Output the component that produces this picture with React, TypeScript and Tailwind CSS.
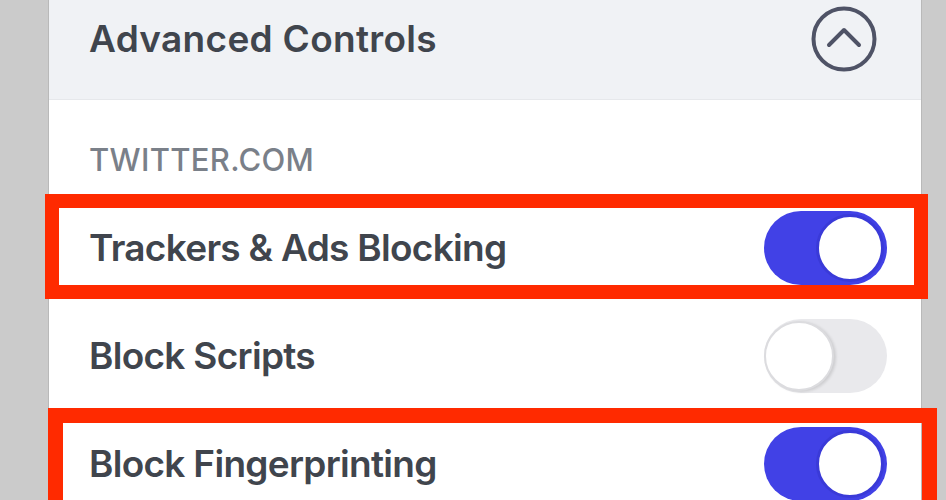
import { useState } from 'react'

type ToggleProps = { on: boolean; onChange: () => void }

const Toggle = ({ on, onChange }: ToggleProps) => {
  return (
    <button
      type="button"
      onClick={onChange}
      className={`relative h-[74px] w-[123px] shrink-0 rounded-full ${on ? 'bg-[#4141e6]' : 'bg-[#e9e9ec]'}`}
    >
      {on ? (
        <span className="absolute right-[3px] top-[3px] h-[68px] w-[68px] rounded-full border-[3px] border-[#3a3ad8] bg-white" />
      ) : (
        <span className="absolute left-0 top-[2px] h-[70px] w-[70px] rounded-full border-2 border-[#dcdcdf] bg-white shadow-[2px_1px_3px_rgba(0,0,0,0.12)]" />
      )}
    </button>
  )
}

const App = () => {
  const [trackers, setTrackers] = useState(true)
  const [scripts, setScripts] = useState(false)
  const [fingerprint, setFingerprint] = useState(true)

  const rows = [
    { label: 'Trackers & Ads Blocking', on: trackers, toggle: () => setTrackers(!trackers) },
    { label: 'Block Scripts', on: scripts, toggle: () => setScripts(!scripts) },
    { label: 'Block Fingerprinting', on: fingerprint, toggle: () => setFingerprint(!fingerprint) },
  ]

  return (
    <div
      className="relative flex h-[500px] w-[946px] overflow-hidden bg-[#cbcbcb] pl-[48px] pr-[24px]"
      style={{ fontFamily: 'Inter, "Noto Sans", sans-serif' }}
    >
      {/* Panel */}
      <div className="flex w-full flex-col border-x border-[#b9b9b9] bg-white">
        {/* Header */}
        <div className="flex h-[100px] shrink-0 items-center justify-between border-b border-[#e6e8eb] bg-[#f0f2f5] pl-[40px] pr-[44px]">
          <h2 className="pb-[22px] text-[37px] font-semibold tracking-[0.3px] text-[#40454d]">Advanced Controls</h2>
          <svg width="66" height="66" viewBox="0 0 66 66" className="mb-[22px]" fill="none">
            <circle cx="33" cy="33" r="30.5" stroke="#4f5366" strokeWidth="4" />
            <path d="M18 39 L33 24 L48 39" stroke="#4f5366" strokeWidth="4" strokeLinecap="round" strokeLinejoin="round" />
          </svg>
        </div>

        {/* Section label */}
        <div className="flex h-[94px] shrink-0 items-center pl-[40px] pt-[26px]">
          <p className="text-[31px] font-medium tracking-[0.3px] text-[#7a8089]">TWITTER.COM</p>
        </div>

        {/* Rows */}
        {rows.map((row) => (
          <div key={row.label} className="flex h-[108px] shrink-0 items-center justify-between pl-[40px] pr-[34px]">
            <span className="text-[37px] font-semibold tracking-[-0.7px] text-[#40454d]">{row.label}</span>
            <Toggle on={row.on} onChange={row.toggle} />
          </div>
        ))}
      </div>

      {/* Red annotation boxes */}
      <div className="pointer-events-none absolute left-[45px] top-[194px] h-[105px] w-[883px] border-[14px] border-[#ff2a00]" />
      <div className="pointer-events-none absolute left-[48px] top-[408px] h-[110px] w-[889px] border-[15px] border-[#ff2a00]" />
    </div>
  )
}

export default App
